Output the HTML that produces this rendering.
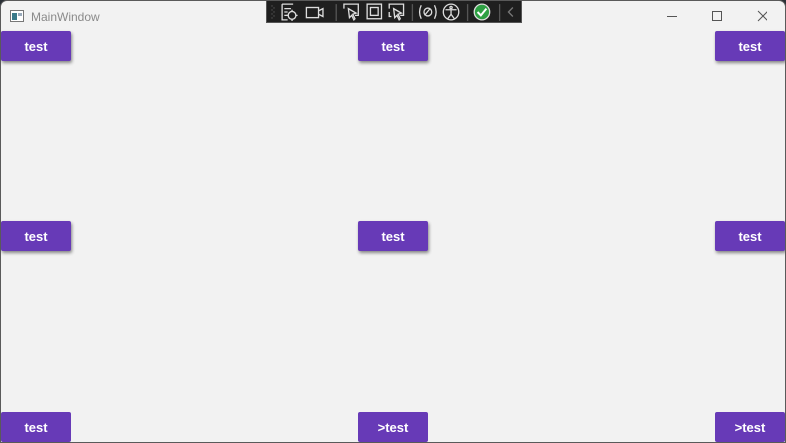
<!DOCTYPE html>
<html><head><meta charset="utf-8"><style>
*{margin:0;padding:0;box-sizing:border-box}
body{width:786px;height:443px;overflow:hidden;background:#2a2f35;font-family:"Liberation Sans",sans-serif;position:relative}
.win{position:absolute;left:0;top:0;width:786px;height:443px;background:#f2f2f2;border-radius:7px 7px 0 0;border:1px solid #5a5a5a;overflow:hidden}
.title{position:absolute;left:30px;top:9px;font-size:12px;color:#8a8a8a}
.btn{position:absolute;width:70px;height:30px;background:#673ab7;color:#fff;font-weight:bold;font-size:13px;display:flex;align-items:center;justify-content:center;border-radius:2px;box-shadow:1px 2px 3px rgba(0,0,0,.45)}
.tb{position:absolute;left:265px;top:0;width:256px;height:22px;background:#1f1f1f;border:1px solid #555;border-top:none}
.tb svg{position:absolute;top:2px}
</style></head><body>
<div class="win">
<svg style="position:absolute;left:9px;top:9px" width="14" height="12"><rect x=".5" y=".5" width="13" height="11" fill="#fff" stroke="#777"/><rect x="2" y="3" width="5" height="7" fill="#3a7a8a"/><rect x="8" y="3" width="4" height="3" fill="#9ab"/></svg>
<div class="title">MainWindow</div>
<svg style="position:absolute;left:666px;top:9px" width="100" height="12" stroke="#555" fill="none" stroke-width="1"><path d="M0 6.5h10"/><rect x="45.5" y="1.5" width="9" height="9"/><path d="M91 1l10 10M101 1l-10 10"/></svg>
<div class="tb">
<svg style="left:3px;top:3px" width="6" height="16" fill="#555"><circle cx="2" cy="2" r=".7"/><circle cx="4" cy="4" r=".7"/><circle cx="2" cy="6" r=".7"/><circle cx="4" cy="8" r=".7"/><circle cx="2" cy="10" r=".7"/><circle cx="4" cy="12" r=".7"/><circle cx="2" cy="14" r=".7"/></svg>
<svg style="left:14px" width="265" height="18" viewBox="0 0 240 16" preserveAspectRatio="none" stroke="#ddd" fill="none" stroke-width="1.2">
<path d="M1 1h10M1 1v14h5M3 5h6M3 8h3M3 11h3"/><circle cx="10" cy="11" r="3.5"/><path d="M10 6v2M10 14v2M5 11h2M13 11h2"/>
<rect x="23" y="4" width="11" height="9"/><path d="M34 7l4-2v7l-4-2"/>
<path d="M50 1v15" stroke="#555"/>
<path d="M57 5V1h13v10h-3M61 5l7 4-3 1 2 4-1 1-2-4-2 2z"/>
<rect x="78" y="1" width="13" height="13"/><rect x="81" y="4" width="7" height="7"/>
<path d="M98 5V1h13v10h-3M98 8v4h2M102 5l7 4-3 1 2 4-1 1-2-4-2 2z"/>
<path d="M119 1v15" stroke="#555"/>
<path d="M127 2q-3 6 0 12M139 2q3 6 0 12M130 11l5-6"/><circle cx="133" cy="8" r="3.5"/>
<circle cx="154" cy="8" r="7"/><circle cx="154" cy="4" r="1"/><path d="M149 6h10M154 6v4l-3 4M154 10l3 4"/>
<path d="M169 1v15" stroke="#555"/>
<circle cx="182" cy="8" r="7" fill="#2ea043" stroke="#ddd"/><path d="M178 8l3 3 5-6" stroke="#fff" stroke-width="1.8"/>
<path d="M198 1v15" stroke="#555"/>
<path d="M210 4l-4 4 4 4" stroke="#777"/>
</svg>
</div>
<div class="btn" style="left:0;top:30px">test</div>
<div class="btn" style="left:357px;top:30px">test</div>
<div class="btn" style="left:714px;top:30px">test</div>
<div class="btn" style="left:0;top:220px">test</div>
<div class="btn" style="left:357px;top:220px">test</div>
<div class="btn" style="left:714px;top:220px">test</div>
<div class="btn" style="left:0;top:411px;box-shadow:none">test</div>
<div class="btn" style="left:357px;top:411px;box-shadow:none">&gt;test</div>
<div class="btn" style="left:714px;top:411px;box-shadow:none">&gt;test</div>
</div>
</body></html>
